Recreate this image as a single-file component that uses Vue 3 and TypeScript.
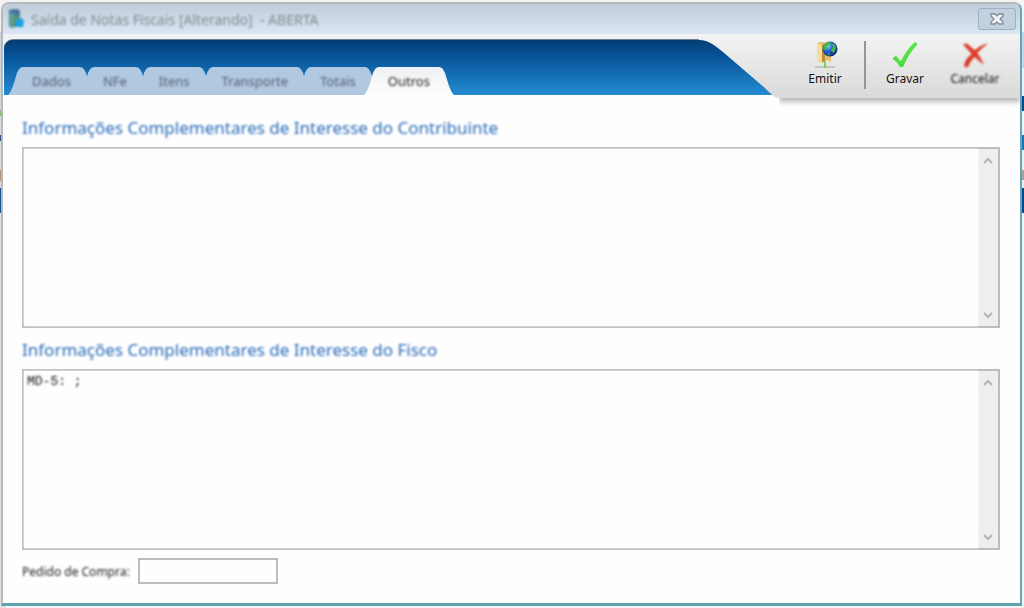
<script setup lang="ts">
import { ref } from 'vue'

const tabs: string[] = ['Dados', 'NFe', 'Itens', 'Transporte', 'Totais', 'Outros']
const active = ref('Outros')
const contribuinte = ref('')
const fisco = ref('MD-5: ;')
const pedido = ref('')
</script>

<template>
  <div class="desktop">
    <main class="window">
      <header class="titlebar soft">
        <svg class="app-icon" viewBox="0 0 17 20" aria-hidden="true">
          <path d="M1 1 L9 0 L12 2 V17 L3 19 L1 17 Z" fill="#4f9387" />
          <path d="M1 1 L9 0 L12 2 L12 6 L1 5 Z" fill="#44739a" />
          <path d="M4 3 V18" stroke="#8bb8a5" stroke-width="1" />
          <path d="M8 12 L14 9 L16 12 L15 18 L8 18 Z" fill="#16a3e6" />
        </svg>
        <h1>Saída de Notas Fiscais [Alterando] &nbsp;- ABERTA</h1>
        <button class="close" type="button" aria-label="Fechar">
          <svg viewBox="0 0 14 12" aria-hidden="true">
            <path d="M1 1 H5 L7 3 L9 1 H13 V3 L10 6 L13 9 V11 H9 L7 9 L5 11 H1 V9 L4 6 L1 3 Z" fill="#f2f5f8" stroke="#7f8b98" stroke-width="1.3" />
          </svg>
        </button>
      </header>

      <div class="ribbon">
        <nav class="tabs soft" role="tablist">
          <button
            v-for="tab in tabs"
            :key="tab"
            type="button"
            role="tab"
            class="tab"
            :class="{ active: tab === active }"
            :aria-selected="tab === active"
            @click="active = tab"
          >
            <svg class="cap" viewBox="0 0 16 28" aria-hidden="true">
              <path d="M0 28 C4 25 7 12 9 6 C11 2 12 0 16 0 V28 Z" />
            </svg>
            <span><b>{{ tab }}</b></span>
            <svg class="cap" viewBox="0 0 16 28" aria-hidden="true">
              <path d="M16 28 C12 25 9 12 7 6 C5 2 4 0 0 0 V28 Z" />
            </svg>
          </button>
        </nav>
        <svg class="swoosh" viewBox="0 0 80 64" aria-hidden="true">
          <defs>
            <linearGradient id="panel" gradientUnits="userSpaceOnUse" x1="0" y1="0" x2="0" y2="64">
              <stop offset="0" stop-color="#f3f3f3" />
              <stop offset="1" stop-color="#dadada" />
            </linearGradient>
            <linearGradient id="tabface" gradientUnits="userSpaceOnUse" x1="0" y1="0" x2="0" y2="28">
              <stop offset="0" stop-color="#eeeff2" />
              <stop offset="1" stop-color="#fefefe" />
            </linearGradient>
          </defs>
          <path d="M0 6 C10 6 16 12 24 18 L66 54 Q75 64 80 64 V0 H0 Z" fill="url(#panel)" />
        </svg>
        <div class="toolbar">
          <button class="tool" type="button">
            <svg viewBox="0 0 24 28" aria-hidden="true">
              <defs>
                <radialGradient id="globe" cx="0.35" cy="0.3" r="0.8">
                  <stop offset="0" stop-color="#8fd0ff" />
                  <stop offset="0.4" stop-color="#2468d2" />
                  <stop offset="1" stop-color="#071b6a" />
                </radialGradient>
              </defs>
              <path d="M4 2 L9 1 L18 2 V21 L14 19 L10 22 L4 20 Z" fill="#e7bd67" />
              <path d="M4 2 L9 4 V22 L4 20 Z" fill="#f8dc94" />
              <path d="M9 4 L12 3 V20 L9 21 Z" fill="#b98a3f" />
              <circle cx="17" cy="8" r="7.5" fill="url(#globe)" />
              <path d="M11 4 Q14 0 17 1 L18 3 L14 5 L14 7 L12 9 L10 8 Z M19 3 L21 3 L23 6 L22 10 L20 12 L18 9 L20 6 Z M14 12 L17 13 L16 15 Z" fill="#42b649" />
              <path d="M12 20 V25" stroke="#6ccc4c" stroke-width="1.6" />
              <path d="M2 26 H22" stroke="#a5a5a5" stroke-width="1.2" />
              <path d="M10 27 L12 23 L14 27 Z" fill="#75d655" />
            </svg>
            <span>Emitir</span>
          </button>
          <i class="rule"></i>
          <button class="tool" type="button">
            <svg viewBox="0 0 26 28" aria-hidden="true">
              <defs>
                <linearGradient id="tick" x1="0" y1="0" x2="1" y2="1">
                  <stop offset="0" stop-color="#2daa22" />
                  <stop offset="0.5" stop-color="#58e64a" />
                  <stop offset="1" stop-color="#2fc022" />
                </linearGradient>
              </defs>
              <path d="M1 17 L4 15 L9 20 Q14 9 23 1 L25 2 L25 4 Q17 12 11 26 L8 26 Q5 21 1 18 Z" fill="url(#tick)" />
            </svg>
            <span>Gravar</span>
          </button>
          <button class="tool soft" type="button">
            <svg viewBox="0 0 27 28" aria-hidden="true">
              <path d="M1 3 L5 2 Q9 5 13 9 Q20 3 27 2 Q21 6 16 12 Q20 18 23 24 Q17 20 13 16 Q8 21 6 27 L2 26 Q3 18 10 13 Q6 8 1 3 Z" fill="#dc3c28" />
            </svg>
            <span>Cancelar</span>
          </button>
        </div>
      </div>

      <form class="content" @submit.prevent>
        <label class="heading soft" for="contribuinte">Informações Complementares de Interesse do Contribuinte</label>
        <div class="memo soft">
          <textarea id="contribuinte" v-model="contribuinte" spellcheck="false"></textarea>
          <div class="scroll">
            <button type="button" aria-label="Rolar para cima"><svg viewBox="0 0 10 7"><path d="M1 6 L5 2 L9 6" /></svg></button>
            <button type="button" aria-label="Rolar para baixo"><svg viewBox="0 0 10 7"><path d="M1 1 L5 5 L9 1" /></svg></button>
          </div>
        </div>
        <label class="heading soft" for="fisco">Informações Complementares de Interesse do Fisco</label>
        <div class="memo soft">
          <textarea id="fisco" v-model="fisco" spellcheck="false"></textarea>
          <div class="scroll">
            <button type="button" aria-label="Rolar para cima"><svg viewBox="0 0 10 7"><path d="M1 6 L5 2 L9 6" /></svg></button>
            <button type="button" aria-label="Rolar para baixo"><svg viewBox="0 0 10 7"><path d="M1 1 L5 5 L9 1" /></svg></button>
          </div>
        </div>
        <div class="order soft">
          <label for="pedido">Pedido de Compra:</label>
          <input id="pedido" v-model="pedido" type="text" />
        </div>
      </form>
    </main>
  </div>
</template>

<style>
body {
  margin: 0;
}
</style>

<style scoped>
.desktop {
  box-sizing: border-box;
  height: 100vh;
  min-height: 400px;
  padding: 2px 2px 2px 1px;
  overflow: hidden;
  background:
    linear-gradient(#f4f4f4 32px, #c9d5e3 32px 68px, #eef1f5 68px 96px, #07478a 96px 111px, #f4f4f4 111px 135px, #1d74bd 135px 150px, #eeeeee 150px 170px, #b49c86 170px 180px, #eeeeee 180px 188px, #06478c 188px 213px, #f4f4f4 213px) right / 6px 100% no-repeat,
    linear-gradient(#f4f4f4 32px, #cbd5df 32px 96px, #d7d7d7 96px 110px, #87b877 110px 116px, #dddddd 116px 135px, #344f8c 135px 141px, #dddddd 141px 170px, #bb9577 170px 181px, #dddddd 181px 188px, #16549a 188px 213px, #e2e2e2 213px) left / 6px 100% no-repeat,
    #f4f4f4;
  font-family: "Noto Sans", "Open Sans", sans-serif;
}

button {
  padding: 0;
  border: 0;
  background: none;
  font: inherit;
  color: inherit;
}

.soft > h1,
.soft > svg,
.soft > label,
.soft > span,
.soft > textarea,
.soft b,
label.soft {
  filter: blur(1px);
}

.window {
  display: flex;
  flex-direction: column;
  box-sizing: border-box;
  height: 100%;
  border: 2px solid #b5b8bc;
  border-right-color: #5fa6b9;
  border-bottom: 3px solid #5fa3b1;
  border-radius: 8px 8px 0 0;
  background: #fefefe;
  overflow: hidden;
}

.titlebar {
  display: flex;
  align-items: center;
  height: 30px;
  padding: 0 4px 0 5px;
  background: linear-gradient(#bfccda, #dae6f3);
}

.app-icon {
  width: 17px;
  height: 20px;
  margin-right: 6px;
}

h1 {
  flex: 1;
  margin: 0;
  color: #858c94;
  font-size: 14px;
  font-weight: 400;
  white-space: nowrap;
}

.close {
  display: flex;
  align-items: center;
  justify-content: center;
  box-sizing: border-box;
  width: 38px;
  height: 22px;
  border: 1px solid #a0afc2;
  border-radius: 3px;
  background: #c3d0df;
}

.close svg {
  width: 14px;
  height: 12px;
}

.ribbon {
  display: flex;
  align-items: flex-start;
  height: 61px;
  background: linear-gradient(#f0f1f3 50%, #fefefe 50%);
}

.tabs {
  display: flex;
  flex: 1;
  align-items: flex-end;
  box-sizing: border-box;
  height: 56px;
  margin: 5px 0 0 1px;
  padding-left: 4px;
  border-top: 1px solid #6d8294;
  border-radius: 9px 0 0 0;
  background: linear-gradient(#033d73, #07549a 30%, #248bd0);
}

.tab {
  display: flex;
  height: 28px;
  color: #566172;
  font-size: 13px;
  line-height: 28px;
}

.tab + .tab {
  margin-left: -16px;
}

.tab span {
  padding: 0 8px;
  background: #b0c8e0;
}

.tab b {
  display: block;
  font-weight: 400;
}

.cap {
  width: 16px;
  height: 28px;
  fill: #b0c8e0;
}

.tab.active {
  z-index: 1;
  color: #222222;
}

.tab.active span {
  background: linear-gradient(#eeeff2, #fefefe);
}

.tab.active .cap {
  fill: url(#tabface);
}

.swoosh {
  flex: none;
  width: 80px;
  height: 64px;
  margin-left: -80px;
}

.toolbar {
  display: flex;
  flex: none;
  align-items: flex-start;
  box-sizing: border-box;
  width: 241px;
  height: 64px;
  padding: 7px 0 0 11px;
  background: linear-gradient(#f3f3f3, #dadada);
  box-shadow: 0 4px 5px #b9b9b9;
  clip-path: inset(0 0 -12px 0);
}

.tool {
  display: flex;
  flex-direction: column;
  align-items: center;
  width: 70px;
  color: #111111;
  font-size: 12px;
  line-height: 20px;
}

.tool svg {
  width: 26px;
  height: 28px;
}

.rule {
  width: 2px;
  height: 48px;
  margin: 0 4px;
  background: #969696;
}

.content {
  display: flex;
  flex: 1;
  flex-direction: column;
  padding: 21px 20px 19px 19px;
}

.heading {
  height: 31px;
  color: #2a6cba;
  font-size: 17px;
  line-height: 24px;
}

.memo {
  display: flex;
  flex: 1;
  box-sizing: border-box;
  min-height: 80px;
  border: 2px solid #bcbcbc;
}

.memo + .heading {
  margin-top: 10px;
}

textarea {
  flex: 1;
  padding: 3px;
  border: 0;
  outline: 0;
  resize: none;
  overflow: hidden;
  background: #fefefe;
  color: #111111;
  font-family: "Liberation Mono", monospace;
  font-size: 13px;
  line-height: 16px;
}

.scroll {
  display: flex;
  flex-direction: column;
  justify-content: space-between;
  width: 20px;
  background: #eeeeee;
}

.scroll button {
  display: flex;
  align-items: center;
  justify-content: center;
  height: 22px;
}

.scroll svg {
  width: 10px;
  height: 7px;
  fill: none;
  stroke: #b4b4b4;
  stroke-width: 2;
}

.order {
  display: flex;
  align-items: center;
  gap: 8px;
  margin-top: 8px;
  color: #222222;
  font-size: 12px;
}

.order input {
  box-sizing: border-box;
  width: 140px;
  height: 26px;
  border: 2px solid #bcbcbc;
  background: #fefefe;
}
</style>
